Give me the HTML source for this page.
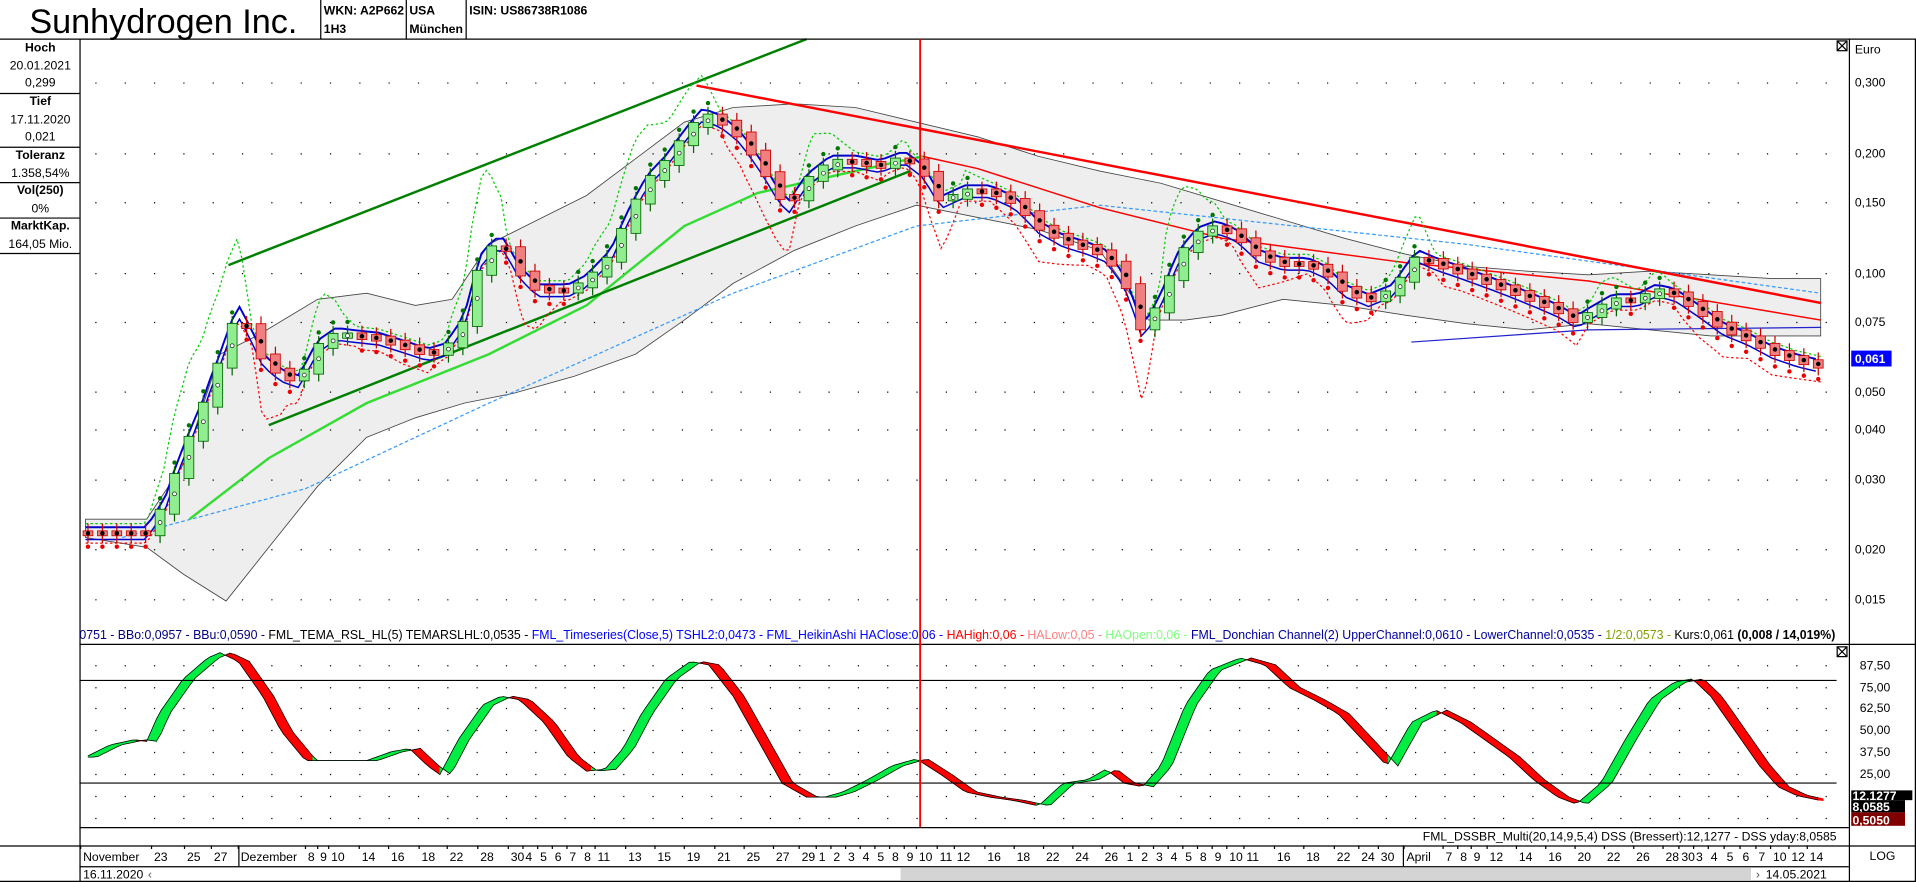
<!DOCTYPE html>
<html><head><meta charset="utf-8"><style>
html,body{margin:0;padding:0;background:#fff;overflow:hidden}
svg{display:block}
text{font-family:"Liberation Sans",sans-serif}
</style></head><body>
<svg id="s" width="1916" height="882" viewBox="0 0 1568 722" preserveAspectRatio="none" xmlns="http://www.w3.org/2000/svg">
<rect width="1568" height="722" fill="#fff"/>
<g id="boll"></g>
<g id="grid"></g>
<g id="lines"></g>
<g id="candles"></g>
<g id="osc"></g>
<g stroke="#000" stroke-width="1" fill="none">
<line x1="0" y1="32" x2="1568" y2="32"/>
<line x1="65.5" y1="32" x2="65.5" y2="722"/>
<line x1="1513.5" y1="32" x2="1513.5" y2="722"/>
<line x1="65" y1="527.5" x2="1568" y2="527.5"/>
<line x1="65" y1="677.5" x2="1513" y2="677.5"/>
<line x1="0" y1="692.5" x2="1568" y2="692.5"/>
<line x1="65" y1="709.5" x2="1513" y2="709.5"/>
<line x1="0" y1="721.5" x2="1568" y2="721.5"/>
<line x1="1567.5" y1="32" x2="1567.5" y2="722"/>
<line x1="262.5" y1="0" x2="262.5" y2="32"/>
<line x1="332.5" y1="0" x2="332.5" y2="32"/>
<line x1="381.5" y1="0" x2="381.5" y2="32"/>
<line x1="0" y1="76.5" x2="65" y2="76.5"/>
<line x1="0" y1="120.5" x2="65" y2="120.5"/>
<line x1="0" y1="149.5" x2="65" y2="149.5"/>
<line x1="0" y1="178.5" x2="65" y2="178.5"/>
<line x1="0" y1="207.5" x2="65" y2="207.5"/>
<line x1="65" y1="557" x2="1503" y2="557"/>
<line x1="65" y1="641" x2="1503" y2="641"/>
</g>
<text x="24" y="27" font-size="28">Sunhydrogen Inc.</text>
<g font-size="10" font-weight="bold">
<text x="265" y="12">WKN: A2P662</text><text x="265" y="27">1H3</text>
<text x="335" y="12">USA</text><text x="335" y="27">München</text>
<text x="384" y="12">ISIN: US86738R1086</text>
</g>
<g font-size="10" text-anchor="middle">
<text x="33" y="42" font-weight="bold">Hoch</text><text x="33" y="57">20.01.2021</text><text x="33" y="71">0,299</text>
<text x="33" y="86" font-weight="bold">Tief</text><text x="33" y="101">17.11.2020</text><text x="33" y="115">0,021</text>
<text x="33" y="130" font-weight="bold">Toleranz</text><text x="33" y="145">1.358,54%</text>
<text x="33" y="159" font-weight="bold">Vol(250)</text><text x="33" y="174">0%</text>
<text x="33" y="188" font-weight="bold">MarktKap.</text><text x="33" y="203">164,05 Mio.</text>
</g>
<g font-size="10">
<text x="1518" y="44">Euro</text>
<text x="1518" y="71">0,300</text><text x="1518" y="129">0,200</text><text x="1518" y="169">0,150</text>
<text x="1518" y="227">0,100</text><text x="1518" y="267">0,075</text><text x="1518" y="324">0,050</text>
<text x="1518" y="355">0,040</text><text x="1518" y="396">0,030</text><text x="1518" y="453">0,020</text>
<text x="1518" y="494">0,015</text>
<rect x="1515" y="287" width="33" height="13" fill="#0000ff"/>
<text x="1518" y="297" fill="#fff" font-weight="bold">0,061</text>
<text x="1522" y="548">87,50</text><text x="1522" y="566">75,00</text><text x="1522" y="583">62,50</text>
<text x="1522" y="601">50,00</text><text x="1522" y="619">37,50</text><text x="1522" y="637">25,00</text>
<rect x="1515" y="647" width="50" height="8" fill="#000"/>
<text x="1516" y="655" fill="#fff" font-weight="bold">12,1277</text>
<rect x="1515" y="655" width="44" height="10" fill="#000"/>
<text x="1516" y="664" fill="#fff" font-weight="bold">8,0585</text>
<rect x="1515" y="665" width="44" height="11" fill="#800000"/>
<text x="1516" y="675" fill="#fff" font-weight="bold">0,5050</text>
<text x="1530" y="704">LOG</text>
</g>
<g stroke="#000" fill="none"><rect x="1503.5" y="33.5" width="8" height="8"/><path d="M1504 34l7 7M1511 34l-7 7"/>
<rect x="1503.5" y="529.5" width="8" height="8"/><path d="M1504 530l7 7M1511 530l-7 7"/></g>
<text x="65" y="523" font-size="10.3" textLength="1437" lengthAdjust="spacingAndGlyphs"><tspan fill="#000080">0751 - BBo:0,0957 - BBu:0,0590 - </tspan><tspan fill="#000">FML_TEMA_RSL_HL(5) TEMARSLHL:0,0535 - </tspan><tspan fill="#0000ff">FML_Timeseries(Close,5) TSHL2:0,0473 - </tspan><tspan fill="#0000ff">FML_HeikinAshi HAClose:0,06 - </tspan><tspan fill="#ff0000">HAHigh:0,06 - </tspan><tspan fill="#ff8080">HALow:0,05 - </tspan><tspan fill="#80ff80">HAOpen:0,06 - </tspan><tspan fill="#0000a0">FML_Donchian Channel(2) UpperChannel:0,0610 - LowerChannel:0,0535 - </tspan><tspan fill="#80a000">1/2:0,0573 - </tspan><tspan fill="#000">Kurs:0,061 </tspan><tspan font-weight="bold">(0,008 / 14,019%)</tspan></text>
<text x="1503" y="688" font-size="10" text-anchor="end">FML_DSSBR_Multi(20,14,9,5,4) DSS (Bressert):12,1277 - DSS yday:8,0585</text>
<rect x="737" y="710" width="696" height="11" fill="#d4d4d4"/>
<text x="68" y="719" font-size="10">16.11.2020</text><text x="121" y="719" font-size="10" fill="#555">‹</text>
<text x="1437" y="719" font-size="10" fill="#555">›</text><text x="1445" y="719" font-size="10">14.05.2021</text>
<g id="dates" font-size="10"></g>
<line x1="753" y1="32" x2="753" y2="677" stroke="#ff0000" stroke-width="1.5"/>
</svg>
<script>
(function(){
var NS="http://www.w3.org/2000/svg";
function el(p,t,a){var e=document.createElementNS(NS,t);for(var k in a)e.setAttribute(k,a[k]);document.getElementById(p).appendChild(e);return e;}
function py(p){return 68-141.06*Math.log(p/0.3);}
function interp(pts,x){if(x<=pts[0][0])return pts[0][1];for(var i=1;i<pts.length;i++){if(x<=pts[i][0]){var a=pts[i-1],b=pts[i];return a[1]+(b[1]-a[1])*(x-a[0])/(b[0]-a[0]);}}return pts[pts.length-1][1];}
[68,126,166,224,264,321,352,393,450,491].forEach(function(y){el("grid","line",{x1:78,y1:y,x2:1503,y2:y,stroke:"#000","stroke-width":1,"stroke-dasharray":"1 23"});});
[545,563,580,598,616,634,652,670].forEach(function(y){el("grid","line",{x1:78,y1:y,x2:1503,y2:y,stroke:"#000","stroke-width":1,"stroke-dasharray":"1 23"});});
var P=[[70,.022],[120,.022],[135,.026],[150,.035],[165,.045],[180,.06],[195,.08],[205,.07],[215,.06],[230,.055],[245,.053],[260,.065],[275,.07],[290,.069],[310,.068],[330,.065],[350,.062],[365,.064],[380,.075],[395,.11],[410,.12],[425,.10],[440,.09],[465,.09],[480,.095],[500,.11],[515,.14],[530,.17],[545,.19],[560,.22],[575,.25],[590,.24],[605,.22],[620,.19],[635,.16],[645,.145],[660,.17],[680,.19],[700,.19],[720,.185],[740,.195],[755,.18],[770,.15],[790,.16],[810,.16],[830,.15],[850,.13],[870,.12],[890,.115],[905,.11],[920,.095],[935,.07],[950,.085],[965,.11],[980,.125],[995,.13],[1010,.125],[1030,.11],[1050,.105],[1070,.105],[1085,.1],[1100,.09],[1120,.085],[1140,.09],[1160,.11],[1175,.105],[1195,.1],[1215,.095],[1235,.09],[1255,.085],[1275,.08],[1290,.075],[1305,.08],[1320,.085],[1340,.085],[1355,.09],[1370,.088],[1390,.08],[1410,.072],[1430,.068],[1450,.063],[1470,.06],[1490,.058]];
function Y(x){return py(interp(P,x));}
var UP=[[70,425],[120,425],[150,380],[180,290],[210,275],[260,245],[300,240],[340,250],[370,245],[400,200],[440,180],[480,160],[520,130],[560,100],[600,88],[650,85],[700,88],[750,100],[800,112],[850,128],[900,140],[950,150],[1000,165],[1050,180],[1100,195],[1150,208],[1200,218],[1250,222],[1300,225],[1350,222],[1400,225],[1450,228],[1490,228]];
var LO=[[1490,275],[1450,275],[1400,275],[1350,270],[1300,265],[1250,270],[1200,265],[1150,258],[1100,250],[1050,245],[1000,258],[970,262],[940,262],[900,205],[850,188],[800,178],[750,168],[700,185],[650,205],[600,232],[560,262],[520,290],[470,308],[420,322],[380,330],[340,342],[300,358],[260,398],[220,448],[185,492],[150,470],[120,448],[70,440]];
el("boll","polygon",{points:UP.concat(LO).map(function(p){return p.join(",")}).join(" "),fill:"#eeeeee",stroke:"#444","stroke-width":0.7});
function poly(pts,a){a.points=pts.map(function(p){return p.join(",")}).join(" ");a.fill="none";return el("lines","polyline",a);}
poly([[100,440],[250,400],[400,330],[600,240],[750,185],[900,168],[1200,200],[1490,240]],{stroke:"#3399ff","stroke-width":1,"stroke-dasharray":"3 2"});
poly([[755,128],[800,138],[900,170],[1000,195],[1150,215],[1300,230],[1490,262]],{stroke:"#ff0000","stroke-width":1.2});
poly([[155,425],[220,375],[300,330],[400,290],[480,250],[560,185],[620,158],[700,140],[755,128]],{stroke:"#33dd33","stroke-width":2});
poly([[187,217],[660,32]],{stroke:"#008000","stroke-width":2});
poly([[220,348],[745,140]],{stroke:"#008000","stroke-width":2});
poly([[570,70],[1490,248]],{stroke:"#ff0000","stroke-width":2});
poly([[1155,280],[1300,270],[1490,268]],{stroke:"#2222cc","stroke-width":1});
var ug=[],lr=[];for(var x=70;x<=1490;x+=4){var v=Y(x),vp=Y(Math.max(70,x-20));ug.push([x,(v-8-Math.max(0,vp-v)*1.0).toFixed(1)]);lr.push([x,(v+8+Math.max(0,v-vp)*1.0).toFixed(1)]);}
poly(ug,{stroke:"#00cc00","stroke-width":1,"stroke-dasharray":"2 2"});
poly(lr,{stroke:"#ff0000","stroke-width":1,"stroke-dasharray":"2 2"});
var b1=[],b2=[];for(x=70;x<=1490;x+=6){b1.push([x,(Y(x)-5).toFixed(1)]);b2.push([x,(Y(x)+5).toFixed(1)]);}
poly(b1,{stroke:"#0000cc","stroke-width":1.6});poly(b2,{stroke:"#0000cc","stroke-width":1.2});
var prev=Y(70);for(x=72;x<=1490;x+=11.8){var c=Y(x),upc=c<prev;var t0=Math.min(c,prev)-2,b0=Math.max(c,prev)+2;if(b0-t0<4){b0=t0+4;}
var col=upc?"#006600":"#cc0000";
el("candles","line",{x1:x,y1:t0-6,x2:x,y2:b0+6,stroke:col,"stroke-width":1});
el("candles","rect",{x:x-4,y:t0,width:8,height:b0-t0,fill:upc?"#90ee90":"#f08080",stroke:col,"stroke-width":0.7});
el("candles","circle",{cx:x,cy:upc?t0-9:b0+9,r:1.8,fill:upc?"#007700":"#ee0000"});
el("candles","circle",{cx:x,cy:(t0+b0)/2,r:1.6,fill:upc?"#fff":"#000",stroke:"#000","stroke-width":0.5});prev=c;}
var O=[[70,35],[90,42],[110,45],[120,44],[130,60],[150,80],[170,92],[180,95],[195,90],[215,70],[230,50],[250,33],[270,33],[300,33],[320,38],[335,40],[350,30],[360,25],[375,45],[395,65],[410,70],[425,68],[445,55],[465,35],[480,27],[495,28],[510,40],[525,60],[545,80],[565,90],[580,88],[600,70],[620,45],[640,20],[660,12],[675,12],[690,15],[710,22],[730,30],[750,34],[770,25],[790,15],[810,12],[830,10],[850,7],[870,20],[890,22],[905,28],[920,20],[935,18],[950,30],[970,65],[990,85],[1015,92],[1035,88],[1055,75],[1075,68],[1095,60],[1115,45],[1135,30],[1155,55],[1175,62],[1195,55],[1215,45],[1235,35],[1255,22],[1275,12],[1290,8],[1310,20],[1330,45],[1350,68],[1370,78],[1385,80],[1400,70],[1420,50],[1440,30],[1455,18],[1470,13],[1490,10]];
function oy(v){return 669.6-1.424*v;}
for(x=72;x<1490;x+=4){var a1=interp(O,x),a2=interp(O,x+4),c1=interp(O,x-9),c2=interp(O,x-5);var g=a2>=c2;
el("osc","polygon",{points:x+","+oy(a1)+" "+(x+4)+","+oy(a2)+" "+(x+4)+","+oy(c2)+" "+x+","+oy(c1),fill:g?"#00ee44":"#ff0000",stroke:g?"#00ee44":"#ff0000","stroke-width":0.6});}
var ol=[],ol2=[];for(x=72;x<=1490;x+=4){ol.push([x,oy(interp(O,x)).toFixed(1)]);ol2.push([x,oy(interp(O,x-9)).toFixed(1)]);}
document.getElementById("osc").appendChild(poly(ol,{stroke:"#000","stroke-width":0.6}));
document.getElementById("osc").appendChild(poly(ol2,{stroke:"#000","stroke-width":0.6}));
var D=[["November",68],["23",126],["25",153],["27",175],["Dezember",197],["8",252],["9",262],["10",271],["14",296],["16",320],["18",345],["22",368],["28",393],["30",418],["4",430],["5",442],["6",454],["7",466],["8",478],["11",489],["13",514],["15",538],["19",562],["21",587],["25",611],["27",635],["29",656],["1",670],["2",682],["3",694],["4",706],["5",718],["8",730],["9",742],["10",752],["11",769],["12",783],["16",808],["18",832],["22",856],["24",880],["26",904],["1",922],["2",934],["3",946],["4",958],["5",970],["8",982],["9",994],["10",1006],["11",1020],["16",1045],["18",1069],["22",1094],["24",1114],["30",1130],["April",1151],["7",1183],["8",1195],["9",1206],["12",1219],["14",1243],["16",1267],["20",1291],["22",1315],["26",1339],["28",1363],["30",1376],["3",1388],["4",1400],["5",1413],["6",1426],["7",1439],["10",1451],["12",1466],["14",1481]];
D.forEach(function(t){var e=el("dates","text",{x:t[1],y:705});e.textContent=t[0];el("dates","line",{x1:t[1]-2,y1:692,x2:t[1]-2,y2:695,stroke:"#000"});});
el("dates","line",{x1:195.5,y1:692,x2:195.5,y2:709,stroke:"#000"});el("dates","line",{x1:1148.5,y1:692,x2:1148.5,y2:709,stroke:"#000"});
})();
</script>
</body></html>
